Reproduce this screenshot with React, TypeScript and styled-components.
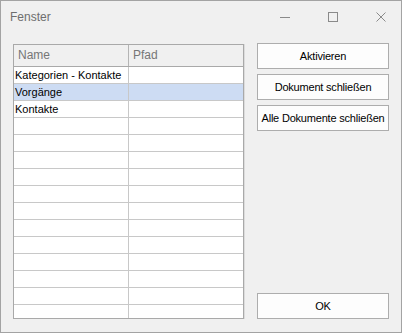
import styled, { createGlobalStyle } from 'styled-components'

const GlobalStyle = createGlobalStyle`
    html, body {
        margin: 0;
        padding: 0;
        background: #f0f0f0;
    }
    body {
        font-family: 'Liberation Sans', Arial, sans-serif;
        font-size: 11px;
    }
`

type Row = { name: string; path: string; selected?: boolean }

const rows: Row[] = [
    { name: 'Kategorien - Kontakte', path: '' },
    { name: 'Vorgänge', path: '', selected: true },
    { name: 'Kontakte', path: '' },
    ...Array.from({ length: 12 }, () => ({ name: '', path: '' })),
]

export default function App() {
    return (
        <>
            <GlobalStyle />
            <Window>
                <TitleBar>
                    <Title>Fenster</Title>
                    <Controls>
                        <ControlButton>
                            <svg width="12" height="12" viewBox="0 0 12 12">
                                <path d="M1 6.5h10" stroke="#8a8a8a" strokeWidth="1" />
                            </svg>
                        </ControlButton>
                        <ControlButton>
                            <svg width="12" height="12" viewBox="0 0 12 12">
                                <rect x="1.5" y="1.5" width="9" height="9" fill="none" stroke="#8a8a8a" strokeWidth="1" />
                            </svg>
                        </ControlButton>
                        <ControlButton>
                            <svg width="12" height="12" viewBox="0 0 12 12">
                                <path d="M1.5 1.5l9 9M10.5 1.5l-9 9" stroke="#8a8a8a" strokeWidth="1" />
                            </svg>
                        </ControlButton>
                    </Controls>
                </TitleBar>
                <Body>
                    <Grid>
                        <HeaderRow>
                            <HeaderCell>Name</HeaderCell>
                            <HeaderCell last>Pfad</HeaderCell>
                        </HeaderRow>
                        {rows.map((r, i) => (
                            <DataRow key={i} selected={r.selected}>
                                <Cell>{r.name}</Cell>
                                <Cell last>{r.path}</Cell>
                            </DataRow>
                        ))}
                    </Grid>
                    <Buttons>
                        <Button>Aktivieren</Button>
                        <Button>Dokument schließen</Button>
                        <Button>Alle Dokumente schließen</Button>
                        <OkButton>OK</OkButton>
                    </Buttons>
                </Body>
            </Window>
        </>
    )
}

const Window = styled.div`
    width: 402px;
    height: 333px;
    box-sizing: border-box;
    border: 1px solid #a3a3a3;
    background: #f0f0f0;
    display: flex;
    flex-direction: column;
`

const TitleBar = styled.div`
    height: 33px;
    display: flex;
    align-items: center;
    padding-left: 9px;
    padding-bottom: 1px;
`

const Title = styled.span`
    flex: 1;
    color: #6e6e6e;
    font-size: 12px;
`

const Controls = styled.div`
    display: flex;
    margin-right: 14px;
    gap: 36px;
`

const ControlButton = styled.div`
    width: 12px;
    height: 12px;
    display: flex;
`

const Body = styled.div`
    flex: 1;
    display: flex;
    padding: 11px 12px 13px 12px;
    gap: 13px;
`

const Grid = styled.div`
    width: 231px;
    height: 275px;
    box-sizing: border-box;
    border: 1px solid #a9a9a9;
    background: #fff;
    overflow: hidden;
    box-shadow: 1px 0 0 #dcdcdc;
`

const HeaderRow = styled.div`
    display: flex;
    height: 22px;
    box-sizing: border-box;
    border-bottom: 1px solid #a9a9a9;
    background: #f0f0f0;
`

const HeaderCell = styled.div<{ last?: boolean }>`
    width: ${(p) => (p.last ? '114px' : '115px')};
    box-sizing: border-box;
    border-right: ${(p) => (p.last ? 'none' : '1px solid #b4b4b4')};
    padding-left: 4px;
    color: #767676;
    line-height: 21px;
    font-size: 12px;
`

const DataRow = styled.div<{ selected?: boolean }>`
    display: flex;
    height: 17px;
    box-sizing: border-box;
    border-bottom: 1px solid #c8c8c8;
    background: ${(p) => (p.selected ? '#cddcf3' : '#fff')};
`

const Cell = styled.div<{ last?: boolean }>`
    width: ${(p) => (p.last ? '114px' : '115px')};
    box-sizing: border-box;
    border-right: ${(p) => (p.last ? 'none' : '1px solid #c8c8c8')};
    padding-left: 1px;
    color: #000;
    line-height: 17px;
    white-space: nowrap;
    overflow: hidden;
`

const Buttons = styled.div`
    display: flex;
    flex-direction: column;
    gap: 5px;
    margin-top: -1px;
    height: 276px;
`

const Button = styled.div`
    width: 132px;
    height: 26px;
    box-sizing: border-box;
    border: 1px solid #adadad;
    background: #fdfdfd;
    display: flex;
    align-items: center;
    justify-content: center;
    color: #000;
    white-space: nowrap;
    letter-spacing: -0.2px;
`

const OkButton = styled(Button)`
    margin-top: auto;
`
